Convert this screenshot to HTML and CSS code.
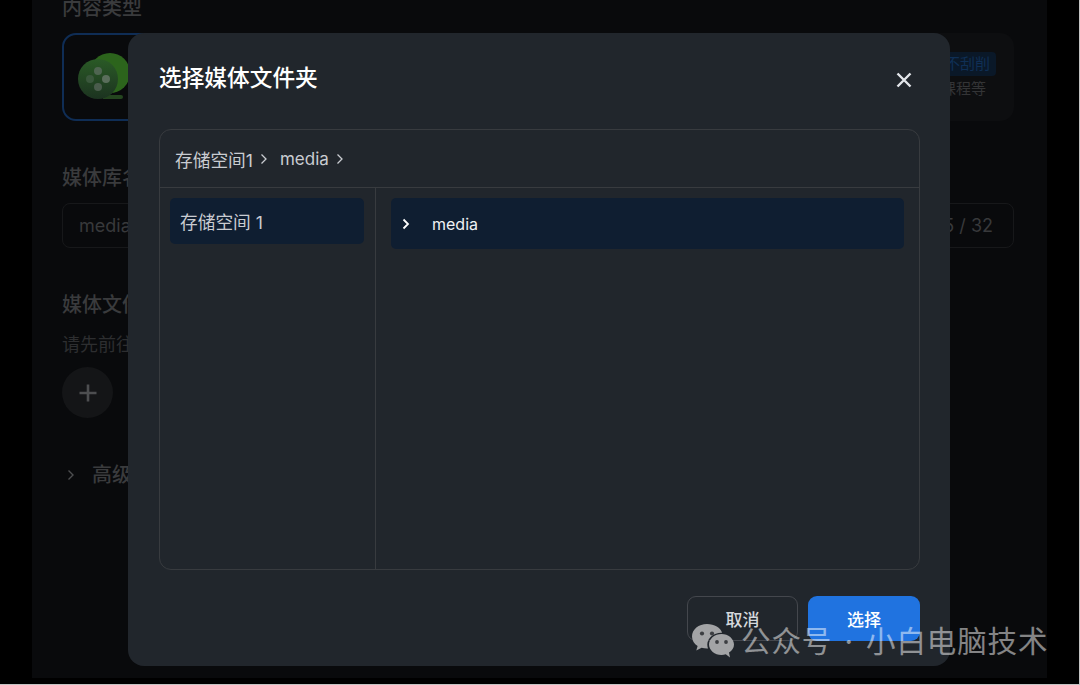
FILE: index.html
```html
<!DOCTYPE html>
<html lang="zh-CN">
  <head>
    <meta charset="UTF-8" />
    <meta name="viewport" content="width=device-width, initial-scale=1.0" />
    <title>选择媒体文件夹</title>
    <link rel="stylesheet" href="styles.css">
  </head>
  <body>
    <div class="screen">
      <main class="page">
        <h3 class="label label-first">内容类型</h3>
        <div class="type-row">
          <div class="type-card type-card-active">
            <svg class="type-icon" width="54" height="50" viewBox="0 0 54 50">
              <defs>
                <linearGradient id="reel" x1="0" y1="0" x2="0" y2="1">
                  <stop offset="0" stop-color="#2a5a26" />
                  <stop offset="1" stop-color="#1c3320" />
                </linearGradient>
              </defs>
              <circle cx="32" cy="20" r="20" fill="#2c641c" />
              <path d="M25 42h18a2 2 0 0 1 0 4H25z" fill="#24451f" />
              <circle cx="20" cy="26" r="20" fill="url(#reel)" />
              <circle cx="20" cy="18" r="4" fill="#4f6551" />
              <circle cx="28" cy="26" r="4" fill="#5a6e5b" />
              <circle cx="20" cy="34" r="4" fill="#4a5c4c" />
              <circle cx="12" cy="26" r="4" fill="#3a573c" />
            </svg>
          </div>
          <div class="type-card type-card-last">
            <span class="tag">不刮削</span>
            <span class="type-note">课程等</span>
          </div>
        </div>

        <h3 class="label label-name">媒体库名称</h3>
        <div class="field">
          <span>media</span>
          <span class="count">5 / 32</span>
        </div>

        <h3 class="label label-files">媒体文件夹</h3>
        <p class="hint">请先前往设置</p>
        <div class="add-btn">
          <svg width="20" height="20" viewBox="0 0 20 20"><path d="M10 1.500v17M1.500 10h17" stroke="#4d4e50" stroke-width="2.600" /></svg>
        </div>

        <div class="advanced">
          <svg width="10" height="12" viewBox="0 0 10 12"><path d="M2.500 1.500 7 6l-4.500 4.500" fill="none" stroke="#4d4e50" stroke-width="1.400" /></svg>
          <span>高级设置</span>
        </div>
      </main>

      <section class="modal">
        <header class="modal-head">
          <h2>选择媒体文件夹</h2>
          <svg class="close" width="16" height="16" viewBox="0 0 16 16"><path d="M1.500 1.500l13 13M14.500 1.500l-13 13" stroke="#e3e6ea" stroke-width="2.400" /></svg>
        </header>

        <div class="picker">
          <div class="crumbs">
            <span>存储空间1</span>
            <svg width="8" height="12" viewBox="0 0 8 12"><path d="M1.500 1.500 6 6l-4.500 4.500" fill="none" stroke="#c9ccd1" stroke-width="1.300" /></svg>
            <span class="crumb-gap">media</span>
            <svg width="8" height="12" viewBox="0 0 8 12"><path d="M1.500 1.500 6 6l-4.500 4.500" fill="none" stroke="#c9ccd1" stroke-width="1.300" /></svg>
          </div>
          <div class="panes">
            <div class="pane-left">
              <div class="disk-item">存储空间 1</div>
            </div>
            <div class="pane-right">
              <div class="folder-item">
                <svg width="10" height="12" viewBox="0 0 10 12"><path d="M2.500 1.500 7 6l-4.500 4.500" fill="none" stroke="#fff" stroke-width="1.800" /></svg>
                <span>media</span>
              </div>
            </div>
          </div>
        </div>

        <footer class="modal-foot">
          <button class="btn btn-cancel">取消</button>
          <button class="btn btn-ok">选择</button>
        </footer>
      </section>

      <div class="watermark">
        <svg width="42" height="34" viewBox="0 0 42 34">
          <path d="M15 0C6.700 0 0 5.500 0 12.400c0 3.900 2.200 7.300 5.600 9.600L4.300 26.500l5.300-2.800c1.700.5 3.500.8 5.400.8h1c-.5-1.300-.7-2.600-.7-4 0-6.600 6.300-11.800 14-11.800h.8C28.700 3.700 22.400 0 15 0z" fill="#a3a4a6" />
          <path d="M42 20.500c0-5.800-5.700-10.500-12.500-10.500S17 14.700 17 20.500 22.700 31 29.500 31c1.500 0 3-.2 4.300-.7l4.200 3.200-1-4.900c3-1.900 5-4.800 5-8.100z" fill="#a3a4a6" />
          <circle cx="10" cy="9.500" r="2.100" fill="#3c3e42" />
          <circle cx="20" cy="9.500" r="2.100" fill="#3c3e42" />
          <circle cx="25" cy="18" r="1.900" fill="#3c3e42" />
          <circle cx="34" cy="18" r="1.900" fill="#3c3e42" />
        </svg>
        <span>公众号 · 小白电脑技术</span>
      </div>
    </div>
  </body>
</html>
```

FILE: styles.css
```css
* {
  box-sizing: border-box;
}

html,
body {
  margin: 0;
  height: 100%;
  overflow: hidden;
}

body {
  font-family: Inter, "Noto Sans CJK SC", sans-serif;
  background-color: #000;
}

.screen {
  position: relative;
  width: 1080px;
  height: 685px;
  overflow: hidden;
  padding-left: 32px;
  padding-right: 32px;
  background-color: #000;
  border-right: 1px solid #c4c4c4;
  border-bottom: 1px solid #c4c4c4;
}

.page {
  width: 1015px;
  height: 100%;
  padding: 0 33px 0 30px;
  background-color: #090a0c;
  color: #3c3d3f;
}

.label {
  margin: 0;
  font-size: 20px;
  line-height: 28px;
  font-weight: 500;
  color: #3a3b3d;
}

.label-first {
  margin-top: -6px;
}

.type-row {
  display: flex;
  justify-content: space-between;
  margin-top: 11px;
}

.type-card {
  height: 88px;
  border-radius: 14px;
  background-color: #0d0e10;
}

.type-card-active {
  width: 200px;
  padding: 18px 0 0 14px;
  background-color: #090a0c;
  border: 2px solid #0f2d55;
}

.type-icon {
  display: block;
}

.type-card-last {
  width: 120px;
  padding: 19px 18px 0 0;
  display: flex;
  flex-direction: column;
  align-items: flex-end;
  font-size: 15px;
}

.tag {
  padding: 0 6px;
  height: 24px;
  line-height: 24px;
  border-radius: 4px;
  color: #0f2f55;
  background-color: #0a1828;
}

.type-note {
  margin-top: 1px;
  margin-right: 10px;
  line-height: 24px;
  color: #333436;
}

.label-name {
  margin-top: 43px;
}

.field {
  display: flex;
  justify-content: space-between;
  align-items: center;
  height: 45px;
  margin-top: 11px;
  padding: 0 20px 0 16px;
  border: 1px solid #17181a;
  border-radius: 8px;
  font-size: 18px;
  color: #38393b;
}

.label-files {
  margin-top: 43px;
}

.hint {
  margin: 13px 0 0;
  font-size: 18px;
  line-height: 26px;
  color: #2d2e30;
}

.add-btn {
  display: flex;
  align-items: center;
  justify-content: center;
  width: 51px;
  height: 51px;
  margin-top: 9px;
  border-radius: 50%;
  background-color: #141517;
}

.advanced {
  display: flex;
  align-items: center;
  gap: 16px;
  margin-top: 43px;
  padding-left: 4px;
  font-size: 20px;
  line-height: 28px;
  font-weight: 500;
  color: #3a3b3d;
}

/* dialog sits over the dimmed page */
.modal {
  position: absolute;
  left: 128px;
  top: 33px;
  width: 822px;
  height: 633px;
  padding: 0 30px 0 31px;
  border-radius: 16px;
  background-color: #21262c;
  color: #d5d8dc;
}

.modal-head {
  display: flex;
  justify-content: space-between;
  align-items: center;
  height: 96px;
  padding-bottom: 9px;
}

.modal-head h2 {
  margin: 0;
  font-size: 22.700px;
  font-weight: 500;
  color: #fff;
}

.close {
  margin-right: 8px;
  margin-top: 7px;
}

.picker {
  height: 441px;
  border: 1px solid #383b3f;
  border-radius: 12px;
  display: flex;
  flex-direction: column;
}

.crumbs {
  display: flex;
  align-items: center;
  gap: 7px;
  height: 58px;
  padding-left: 15px;
  border-bottom: 1px solid #383b3f;
  font-size: 17.700px;
  color: #c9ccd1;
}

.crumb-gap {
  margin-left: 5px;
  font-size: 17px;
}

.panes {
  flex: 1;
  display: flex;
}

.pane-left {
  width: 216px;
  padding: 10px 11px 0 10px;
  border-right: 1px solid #383b3f;
}

.disk-item {
  height: 46px;
  line-height: 49px;
  padding-left: 10px;
  border-radius: 5px;
  background-color: #0f1e31;
  font-size: 17.700px;
  color: #c9ccd1;
}

.pane-right {
  flex: 1;
  padding: 10px 15px 0 15px;
}

.folder-item {
  display: flex;
  align-items: center;
  gap: 21px;
  height: 51px;
  padding-left: 10px;
  border-radius: 5px;
  background-color: #0f1e31;
  font-size: 16px;
  color: #f0f1f3;
}

.modal-foot {
  display: flex;
  justify-content: flex-end;
  gap: 10px;
  margin-top: 26px;
}

.btn {
  width: 111px;
  height: 45px;
  border-radius: 9px;
  font-family: inherit;
  font-size: 17px;
  font-weight: 500;
}

.btn-cancel {
  background: transparent;
  border: 1px solid #44474d;
  color: #d5d8dc;
}

.btn-ok {
  width: 112px;
  border: none;
  background-color: #2073e0;
  color: #fff;
}

.watermark {
  position: absolute;
  left: 692px;
  top: 622px;
  display: flex;
  align-items: center;
  gap: 7px;
  font-size: 29.500px;
  line-height: 38px;
  letter-spacing: 0.900px;
  word-spacing: 3px;
  white-space: nowrap;
  color: rgba(255, 255, 255, 0.5);
}
```
